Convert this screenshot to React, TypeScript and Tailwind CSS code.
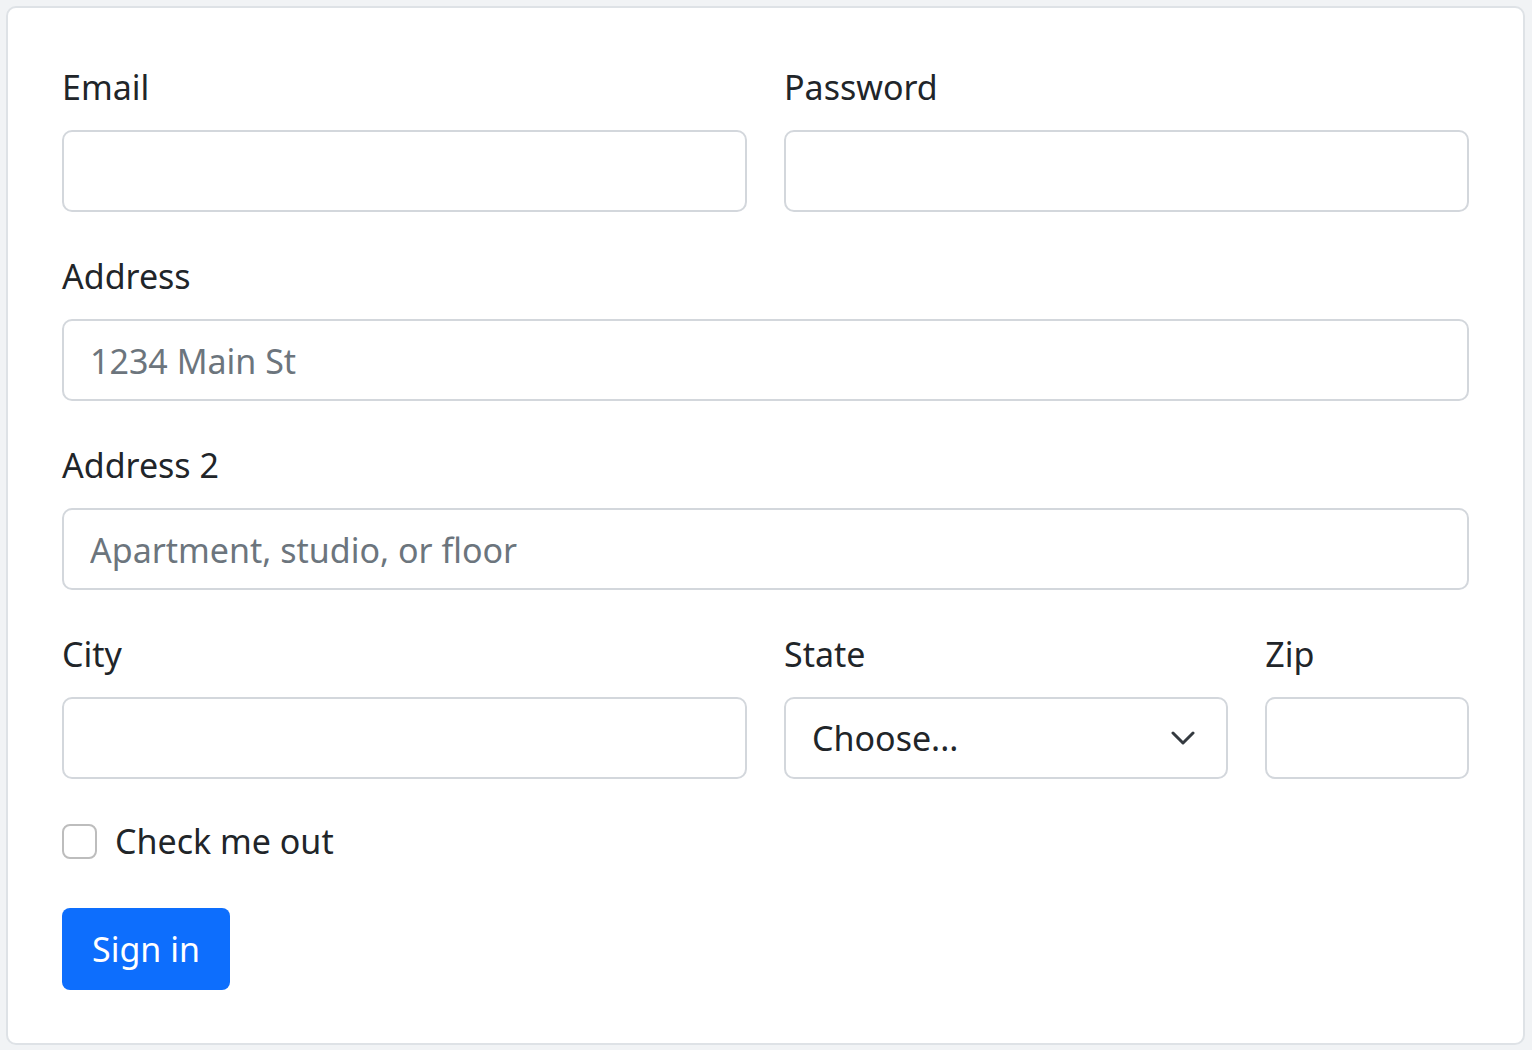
import React from "react";

const font = { fontFamily: '"Noto Sans", "Open Sans", sans-serif' };

function Field({ label, placeholder, span }: { label: string; placeholder?: string; span: string }) {
  return (
    <div className={span}>
      <label className="mb-[18px] block pt-[3px] text-[34px] leading-[50px] text-[#212529]">{label}</label>
      <input
        type="text"
        placeholder={placeholder}
        className="block h-[82px] w-full rounded-[10px] border-2 border-[#d3d7dc] bg-white px-[26px] pt-[2px] text-[34px] text-[#212529] outline-none placeholder:text-[#6c757d]"
      />
    </div>
  );
}

export default function App() {
  return (
    <div className="h-[1050px] w-[1532px] bg-[#f1f3f5] pl-[6px] pt-[6px]" style={font}>
      <div className="h-[1039px] w-[1519px] rounded-[10px] border-2 border-[#dee2e6] bg-white px-[54px] pt-[51px]">
        <form className="grid grid-cols-12 gap-x-[37px] gap-y-[36px]">
          <Field label="Email" span="col-span-6" />
          <Field label="Password" span="col-span-6" />
          <Field label="Address" placeholder="1234 Main St" span="col-span-12" />
          <Field label="Address 2" placeholder="Apartment, studio, or floor" span="col-span-12" />
          <Field label="City" span="col-span-6" />
          <div className="col-span-4">
            <label className="mb-[18px] block pt-[3px] text-[34px] leading-[50px] text-[#212529]">State</label>
            <div className="flex h-[82px] w-full items-center justify-between rounded-[10px] border-2 border-[#d3d7dc] bg-white pl-[26px] pr-[31px] text-[34px] text-[#212529]">
              <span>Choose...</span>
              <svg width="24" height="16" viewBox="0 0 24 16" fill="none">
                <path d="M2 3l10 10 10-10" stroke="#343a40" strokeWidth="3" strokeLinecap="round" strokeLinejoin="round" />
              </svg>
            </div>
          </div>
          <Field label="Zip" span="col-span-2" />
          <div className="col-span-12 flex h-[53px] items-center gap-[18px]">
            <span className="h-[35px] w-[35px] rounded-[8px] border-2 border-[#bdbdbd] bg-white" />
            <span className="text-[34px] leading-[53px] text-[#212529]">Check me out</span>
          </div>
          <div className="col-span-12 pt-[4px]">
            <button
              type="button"
              className="h-[82px] rounded-[8px] bg-[#0d6efd] px-[30px] text-[34px] text-white"
            >
              Sign in
            </button>
          </div>
        </form>
      </div>
    </div>
  );
}
